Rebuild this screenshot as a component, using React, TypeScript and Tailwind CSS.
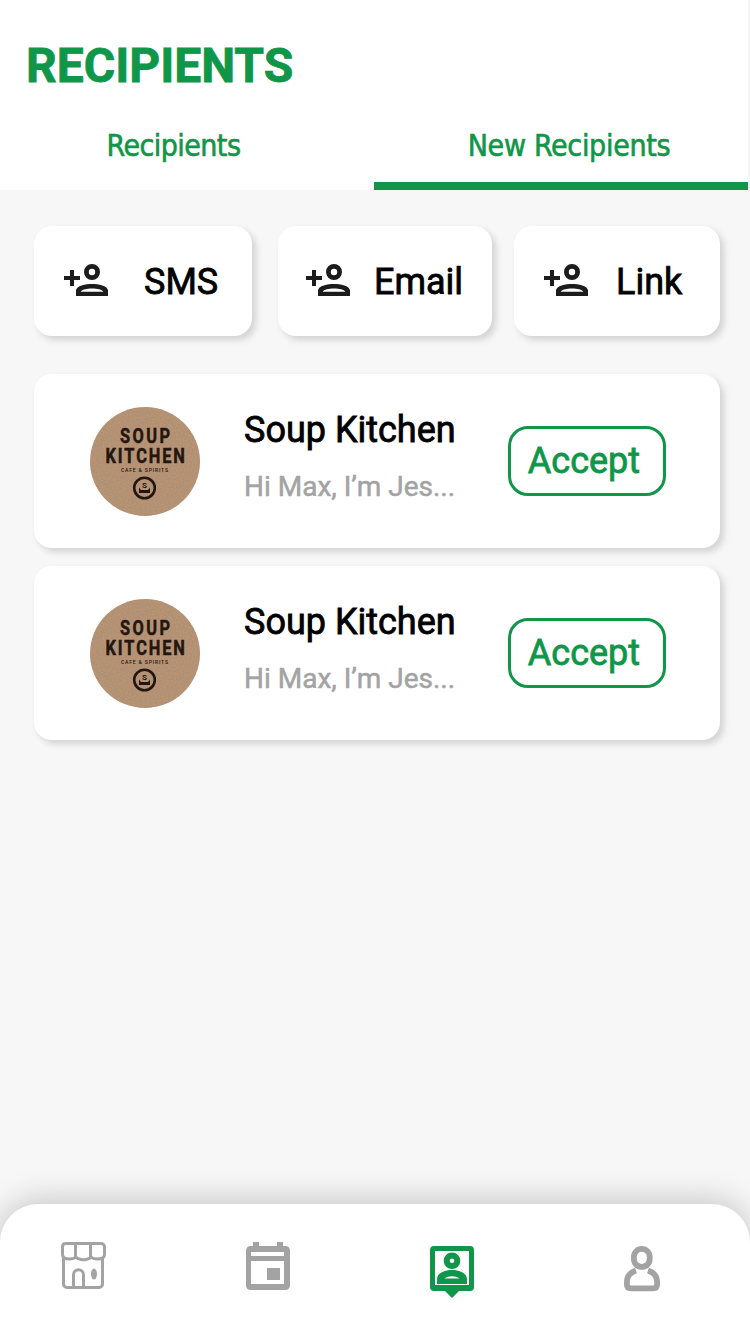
import type { ReactNode } from "react";

const INVITES = [
  { label: "SMS", card: "w-[218px] pl-7 mr-[26px]", gap: "ml-[34px]" },
  { label: "Email", card: "w-[214px] pl-[26px] mr-[22px]", gap: "ml-[22px]" },
  { label: "Link", card: "w-[206px] pl-7", gap: "ml-[26px]" },
];

const REQUESTS = [
  { id: 1, name: "Soup Kitchen", message: "Hi Max, I’m Jes..." },
  { id: 2, name: "Soup Kitchen", message: "Hi Max, I’m Jes..." },
];

function PersonAddIcon() {
  return (
    <svg viewBox="0 0 24 24" className="-mt-0.5 size-12 shrink-0" fill="#1c1c1c">
      <path d="M4 7v3H1v2h3v3h2v-3h3v-2H6V7z" />
      <path
        fillRule="evenodd"
        d="M15 4a4 4 0 1 0 0 8 4 4 0 0 0 0-8zm0 2.400a1.600 1.600 0 1 1 0 3.200 1.600 1.600 0 0 1 0-3.200z"
      />
      <path
        fillRule="evenodd"
        d="M15 14c-3 0-8 .8-8 3.300V20h16v-2.700c0-2.500-5-3.300-8-3.300zm0 2.300c2.700 0 5 .6 5.700 1.600H9.300c.7-1 3-1.600 5.700-1.600z"
      />
    </svg>
  );
}

// Round kraft-paper logo of the Soup Kitchen
function Logo({ id }: { id: number }) {
  return (
    <svg viewBox="0 0 110 110" className="mt-0.5 h-[110px] w-[110px] shrink-0">
      <defs>
        <filter id={`kraft-${id}`} x="0" y="0" width="100%" height="100%">
          <feTurbulence type="fractalNoise" baseFrequency="0.6" numOctaves="2" />
          <feColorMatrix values="0 0 0 0 0.3  0 0 0 0 0.2  0 0 0 0 0.14  0.7 0 0 0 -0.22" />
          <feComposite in2="SourceGraphic" operator="in" />
        </filter>
      </defs>
      <ellipse cx="55" cy="54.500" rx="55" ry="54.500" fill="#b99576" />
      <ellipse cx="55" cy="54.500" rx="55" ry="54.500" filter={`url(#kraft-${id})`} />
      <g fill="#24160f" fontFamily="Roboto, sans-serif">
        {/* squeezed sideways for the tall, spaced lettering */}
        <g
          transform="scale(0.84 1)"
          fontSize="19.500"
          fontWeight="700"
          stroke="#24160f"
          strokeWidth="0.5"
        >
          <text x="35.700" y="36.500" textLength="59.500">
            SOUP
          </text>
          <text x="18.500" y="56" textLength="94.500">
            KITCHEN
          </text>
        </g>
        <text x="31" y="65" fontSize="5" fontWeight="500" textLength="47">
          CAFE &amp; SPIRITS
        </text>
        <text x="54.500" y="81" fontSize="8" fontWeight="700" textAnchor="middle">
          S
        </text>
      </g>
      <circle cx="54.500" cy="81" r="10.300" fill="none" stroke="#24160f" strokeWidth="2.600" />
      <path d="M49 80.500l2 2.500h7l2-2.500v5.500H49z" fill="#24160f" />
    </svg>
  );
}

function StoreIcon() {
  return (
    <svg viewBox="0 0 46 48" className="h-12 w-[46px]" fill="none" stroke="#a3a3a3" strokeWidth="3">
      <path d="M5 1.500h36c2 0 3.500 1.500 3.500 3.500v7.500c0 3.500-3 4.500-7 4.500-3 0-5-.5-6.500-2-3 3.500-12 3.500-15 0-1.500 1.500-3.500 2-6.500 2-4.500 0-7-1-7-4.500V5c0-2 1-3.500 3-3.500z" />
      <path d="M15.500 2v13M30.500 2v13" />
      <path d="M3.500 16v26c0 2 1.500 3.500 3.500 3.500h32c2 0 3.500-1.500 3.500-3.500V16" />
      <path d="M13.500 45V33c0-7 10-7 10 0v12" />
      <ellipse cx="34" cy="32" rx="3" ry="5.500" fill="#a3a3a3" stroke="none" />
    </svg>
  );
}

function CalendarIcon() {
  return (
    <svg viewBox="0 0 44 48" className="h-12 w-11" fill="#a3a3a3">
      <path
        fillRule="evenodd"
        d="M7 0h6v4h18V0h6v4h2.500A4.500 4.500 0 0 1 44 8.500v35a4.500 4.500 0 0 1-4.500 4.500h-35A4.500 4.500 0 0 1 0 43.500v-35A4.500 4.500 0 0 1 4.500 4H7zM5 10v4h33v-4zM5 19v23h33V19z"
      />
      <path d="M21 26h13v12H21z" />
    </svg>
  );
}

function PinAccountIcon() {
  return (
    <svg viewBox="0 0 44 52" className="h-[52px] w-11" fill="#109648">
      <path
        fillRule="evenodd"
        d="M4 0h36a4 4 0 0 1 4 4v37a4 4 0 0 1-4 4H29l-7 7-7-7H4a4 4 0 0 1-4-4V4a4 4 0 0 1 4-4zm1 5v34h34V5z"
      />
      <path fillRule="evenodd" d="M22 6.500a8.300 8.300 0 1 0 0 16.600 8.300 8.300 0 0 0 0-16.600zm0 6a2.300 2.300 0 1 1 0 4.600 2.300 2.300 0 0 1 0-4.600z" />
      <path fillRule="evenodd" d="M22 24c-7 0-15 3-15 9v5h30v-5c0-6-8-9-15-9zm0 6.300c3 0 5.500.7 7.500 2.200h-15c2-1.500 4.500-2.200 7.500-2.200z" />
    </svg>
  );
}

function ProfileIcon() {
  return (
    <svg viewBox="0 0 36 46" className="h-[46px] w-9" fill="none" stroke="#a3a3a3" strokeWidth="5.800">
      <rect x="9.900" y="2.900" width="15.800" height="18" rx="7.900" />
      <path d="M12 24.500C6 26.500 2.900 31 2.900 36v2.500c0 2.500 1.500 3.800 4 3.800h22.200c2.500 0 4-1.300 4-3.800V36c0-5-3.100-9.500-9.100-11.500" />
    </svg>
  );
}

function Card({ className, children }: { className?: string; children: ReactNode }) {
  return (
    <div className={`flex items-center rounded-[18px] bg-white shadow-[4px_4px_7px_rgba(0,0,0,0.15)] ${className ?? ""}`}>
      {children}
    </div>
  );
}

export default function App() {
  return (
    <div className="flex h-[1334px] w-[750px] flex-col overflow-hidden bg-[#f7f7f7] font-[Roboto,sans-serif] text-black">
      <header className="h-[190px] w-[748px] bg-white text-[#109648]">
        <h1 className="h-[102px] pt-[38px] pl-[26px] text-[48px] leading-[56px] font-bold [-webkit-text-stroke:0.8px]">
          RECIPIENTS
        </h1>
        <nav className="flex h-[88px] font-['DejaVu_Sans_Condensed','DejaVu_Sans',sans-serif] text-[30px] [-webkit-text-stroke:0.6px] [font-stretch:condensed]">
          <button className="w-[374px] pr-[27px] pb-px tracking-[-0.55px]">Recipients</button>
          <button className="w-[374px] border-b-8 border-[#109648] pt-[7px] pl-4 tracking-[-0.3px]">
            New Recipients
          </button>
        </nav>
      </header>

      <main className="flex-1 pt-9 pl-[34px]">
        <div className="flex">
          {INVITES.map(({ label, card, gap }) => (
            <Card key={label} className={`h-[110px] ${card}`}>
              <PersonAddIcon />
              <span className={`pt-0.5 text-4xl [-webkit-text-stroke:0.8px] ${gap}`}>{label}</span>
            </Card>
          ))}
        </div>

        <div className="mt-[38px] flex w-[686px] flex-col gap-[18px]">
          {REQUESTS.map(({ id, name, message }) => (
            <Card key={id} className="h-[174px] pl-14">
              <Logo id={id} />
              <div className="-mt-[11px] ml-11 w-[264px]">
                <p className="text-4xl leading-[44px] [-webkit-text-stroke:0.8px]">{name}</p>
                <p className="mt-[19px] text-[28px] leading-8 text-[#a3a3a3] [-webkit-text-stroke:0.5px]">
                  {message}
                </p>
              </div>
              <button className="h-[70px] w-[158px] rounded-[20px] border-3 border-[#109648] pr-1.5 text-4xl text-[#109648] [-webkit-text-stroke:0.8px]">
                Accept
              </button>
            </Card>
          ))}
        </div>
      </main>

      <footer className="flex h-[130px] items-start rounded-t-[38px] bg-white pl-[60px] shadow-[0_-4px_32px_rgba(0,0,0,0.2)]">
        <div className="mt-[38px] w-[186px]">
          <StoreIcon />
        </div>
        <div className="mt-[38px] w-[184px]">
          <CalendarIcon />
        </div>
        <div className="mt-[42px] w-[194px]">
          <PinAccountIcon />
        </div>
        <div className="mt-[42px]">
          <ProfileIcon />
        </div>
      </footer>
    </div>
  );
}
